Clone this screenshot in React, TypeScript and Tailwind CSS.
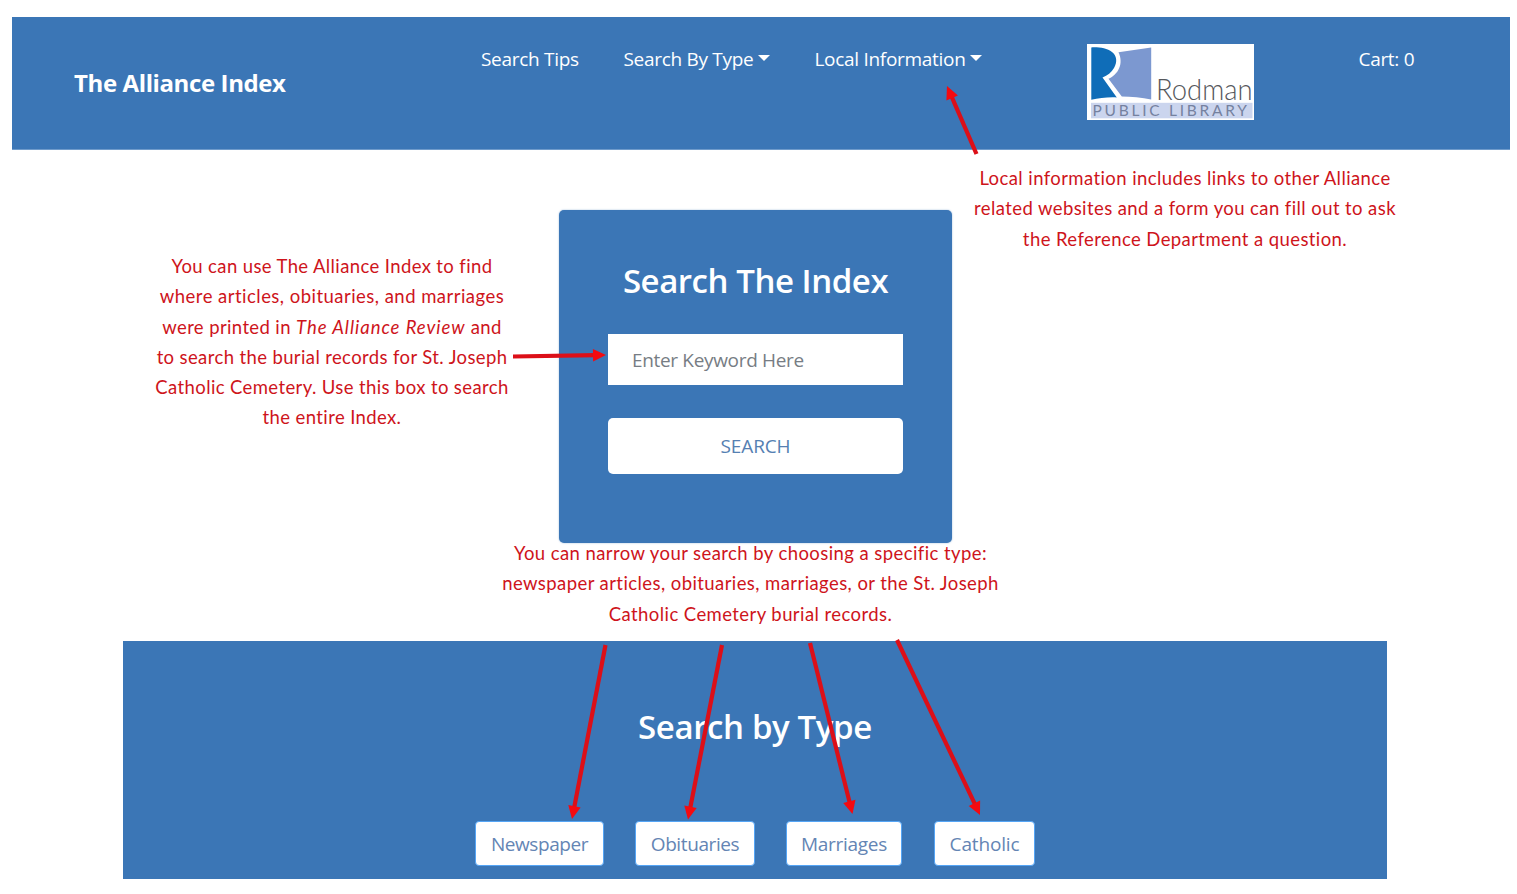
import type { ReactNode } from "react";

function Caret({ className }: { className: string }) {
  return (
    <svg viewBox="0 0 12 6" className={`h-[6px] w-[12px] shrink-0 ${className}`} fill="#fff">
      <path d="M0 0H12L6 6Z" />
    </svg>
  );
}

function Logo() {
  return (
    <svg viewBox="0 0 167 76" className="mt-[27px] ml-[103px] h-[76px] w-[167px] shrink-0">
      <rect width="167" height="76" fill="#fff" />
      <path d="M4.300 3.400C12 3 20 4.200 25 8C30 12 30.500 18 27 24C24.500 28.500 20.500 31.500 15.500 33.600L29.800 53.400C21 52.800 12 54.300 4.300 55.800Z" fill="#0f6db8" />
      <path d="M31.500 8.200L64.200 3.400V55.400C55 53.800 44 52.800 34.800 52.600L21.500 34.700C31 30.500 37 20 31.500 8.200Z" fill="#7c98d0" />
      <rect x="4" y="58.800" width="161.500" height="15.500" fill="#cbd5ee" />
      <text x="69" y="55.600" fontFamily="Lato" fontWeight="300" fontSize="29" textLength="96.500" lengthAdjust="spacingAndGlyphs" fill="#55575c">
        Rodman
      </text>
      <text x="5.500" y="72.300" fontFamily="Lato" fontSize="15.500" textLength="154.500" fill="#75819f">
        PUBLIC LIBRARY
      </text>
    </svg>
  );
}

function Note({ className, children }: { className: string; children: ReactNode }) {
  return (
    <div
      className={`absolute flex flex-col items-center text-center font-['Lato','Open_Sans',sans-serif] text-[18.5px] leading-[30.3px] whitespace-nowrap text-[#ce141b] ${className}`}
    >
      {children}
    </div>
  );
}

const arrows = [
  [976.5, 154, 947, 86],
  [513, 356.5, 606, 355],
  [605.5, 645, 572, 819],
  [722, 645, 688, 819.5],
  [810, 643, 852.5, 814],
  [897, 640, 980, 815],
];

function Arrows() {
  return (
    <svg viewBox="0 0 1517 894" className="pointer-events-none absolute top-0 left-0 h-[894px] w-[1517px]">
      {arrows.map(([x1, y1, x2, y2]) => {
        const length = Math.hypot(x2 - x1, y2 - y1);
        const angle = (Math.atan2(y2 - y1, x2 - x1) * 180) / Math.PI;
        return (
          <g key={`${x1}-${y1}`} transform={`translate(${x1} ${y1}) rotate(${angle})`}>
            <path d={`M0 0H${length - 10}`} stroke="#dc0f18" strokeWidth="4.2" />
            <path d={`M${length} 0l-13 -6.300v12.600Z`} fill="#f40a10" />
          </g>
        );
      })}
    </svg>
  );
}

const types = [
  { label: "Newspaper", size: "w-[129px] mr-[31px] tracking-[-0.45px]" },
  { label: "Obituaries", size: "w-[120px] mr-[31px] tracking-[-0.4px]" },
  { label: "Marriages", size: "w-[116px] mr-[32px] tracking-[-0.3px]" },
  { label: "Catholic", size: "w-[101px] tracking-[-0.15px]" },
];

export default function App() {
  return (
    <div className="relative flex h-[894px] w-[1517px] flex-col overflow-hidden bg-white pt-[17px] font-['Open_Sans','Noto_Sans',sans-serif] text-[19px]">
      <header className="ml-[12px] flex h-[133px] w-[1498px] shrink-0 items-start border-b border-[#6f9bcb] bg-[#3b76b6] leading-[28px] whitespace-nowrap text-white">
        <h1 className="mt-[51px] ml-[62px] w-[407px] text-[24px] leading-[30px] font-bold tracking-[-0.39px]">The Alliance Index</h1>
        <nav className="mt-[28px] flex tracking-[-0.3px]">
          <a className="w-[142.5px]">Search Tips</a>
          <a className="flex w-[191px]">
            Search By Type
            <Caret className="mt-[10px] ml-[5px]" />
          </a>
          <a className="flex w-[169px]">
            Local Information
            <Caret className="mt-[10px] ml-[5px]" />
          </a>
        </nav>
        <Logo />
        <a className="mt-[28px] ml-[105px] tracking-[-0.31px]">Cart: 0</a>
      </header>

      <form className="mt-[60px] ml-[559px] flex h-[333px] w-[393px] shrink-0 flex-col rounded-[5px] bg-[#3b76b6] px-[49px] pt-[50px] shadow-[0_0_2px_#9bb9da]">
        <h2 className="text-center text-[33px] leading-[42px] font-semibold tracking-[-0.45px] whitespace-nowrap text-white">Search The Index</h2>
        <input
          className="mt-[32px] h-[51px] w-[295px] bg-white px-[24px] tracking-[-0.33px] placeholder:text-[#777d84] placeholder:opacity-100"
          placeholder="Enter Keyword Here"
        />
        <button type="button" className="mt-[33px] h-[56px] w-[295px] rounded-[5px] bg-white tracking-[-0.14px] text-[#5580b2]">
          SEARCH
        </button>
      </form>

      <section className="mt-[98px] ml-[123px] flex h-[238px] w-[1264px] shrink-0 flex-col items-center bg-[#3b76b6]">
        <h2 className="mt-[65px] text-[33px] leading-[42px] font-semibold tracking-[-0.38px] text-white">Search by Type</h2>
        <div className="mt-[73px] flex">
          {types.map(({ label, size }) => (
            <button key={label} type="button" className={`h-[45px] rounded-[4px] border border-[#55a5f5] bg-white pt-px text-[#6485b4] ${size}`}>
              {label}
            </button>
          ))}
        </div>
      </section>

      <Note className="top-[163px] left-[974px] w-[422px] tracking-[0.41px]">
        <span>Local information includes links to other Alliance</span>
        <span>related websites and a form you can fill out to ask</span>
        <span>the Reference Department a question.</span>
      </Note>
      <Note className="top-[251px] left-[156px] w-[352px] tracking-[0.38px]">
        <span>You can use The Alliance Index to find</span>
        <span className="tracking-[0.47px]">where articles, obituaries, and marriages</span>
        <span>
          were printed in <i className="tracking-[0.95px]">The Alliance Review</i> and
        </span>
        <span>to search the burial records for St. Joseph</span>
        <span>Catholic Cemetery. Use this box to search</span>
        <span>the entire Index.</span>
      </Note>
      <Note className="top-[538px] left-[501px] w-[499px] tracking-[0.42px]">
        <span>You can narrow your search by choosing a specific type:</span>
        <span>newspaper articles, obituaries, marriages, or the St. Joseph</span>
        <span>Catholic Cemetery burial records.</span>
      </Note>
      <Arrows />
    </div>
  );
}
